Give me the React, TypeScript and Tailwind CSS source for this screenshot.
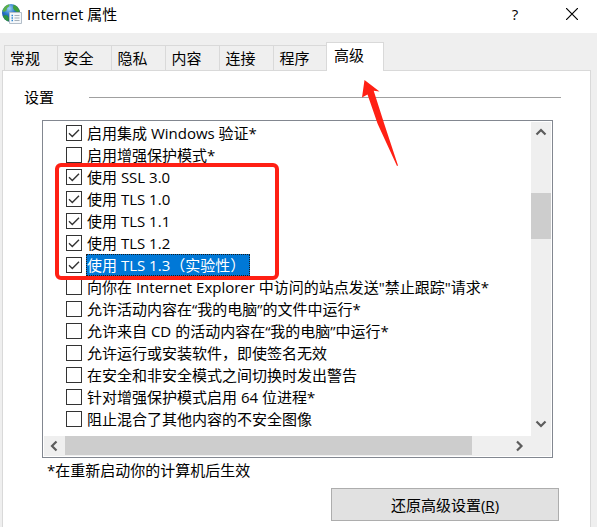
import { useState } from "react";

interface Option {
  id: string;
  label: string;
  checked: boolean;
}

const TABS = ["常规", "安全", "隐私", "内容", "连接", "程序", "高级"];

const OPTIONS: Option[] = [
  { id: "verify", label: "启用集成 Windows 验证*", checked: true },
  { id: "protect", label: "启用增强保护模式*", checked: false },
  { id: "ssl30", label: "使用 SSL 3.0", checked: true },
  { id: "tls10", label: "使用 TLS 1.0", checked: true },
  { id: "tls11", label: "使用 TLS 1.1", checked: true },
  { id: "tls12", label: "使用 TLS 1.2", checked: true },
  { id: "tls13", label: "使用 TLS 1.3（实验性）", checked: true },
  { id: "dnt", label: "向你在 Internet Explorer 中访问的站点发送\"禁止跟踪\"请求*", checked: false },
  { id: "files", label: "允许活动内容在“我的电脑”的文件中运行*", checked: false },
  { id: "cd", label: "允许来自 CD 的活动内容在“我的电脑”中运行*", checked: false },
  { id: "unsigned", label: "允许运行或安装软件，即使签名无效", checked: false },
  { id: "warn", label: "在安全和非安全模式之间切换时发出警告", checked: false },
  { id: "x64", label: "针对增强保护模式启用 64 位进程*", checked: false },
  { id: "mixed", label: "阻止混合了其他内容的不安全图像", checked: false },
];

const CHEVRONS = {
  up: "M1.5 8.5 6 4l4.5 4.5",
  down: "M1.5 3.5 6 8l4.5-4.5",
  left: "M7.5 1.5 3 6l4.5 4.5",
  right: "M4 1.5 8.5 6 4 10.5",
};

function Chevron({ direction }: { direction: keyof typeof CHEVRONS }) {
  return (
    <svg className="size-3" viewBox="0 0 12 12" fill="none" stroke="#5c5c5c" strokeWidth={2.2}>
      <path d={CHEVRONS[direction]} />
    </svg>
  );
}

function InternetIcon() {
  return (
    <svg className="size-5" viewBox="0 0 20 20" aria-hidden="true">
      <defs>
        <radialGradient id="globe" cx="0.4" cy="0.25" r="0.75">
          <stop offset="0" stopColor="#9fd3f5" />
          <stop offset="0.45" stopColor="#2b78c8" />
          <stop offset="1" stopColor="#0f3384" />
        </radialGradient>
      </defs>
      <circle cx="9" cy="9" r="9" fill="url(#globe)" />
      <path d="M1.5 4.5C2.8 2 5.2.6 7.500.2L7 2.500 5 4 4.500 6.500 2 8 .5 7z" fill="#5cb046" />
      <path d="M11.500.8c3.500 1 5.800 3.700 6.300 7L15 8l-2.500-1.500-1.500-2.500z" fill="#3f9e3a" />
      <path d="M2.500 11l3 .5L7 14l-.5 3.500C4 16.800 2 15 1 12.500z" fill="#2f9440" />
      <path d="M7.500 8.500h12v11h-12z" fill="#f4f7fa" stroke="#b3bec9" />
      <path d="M9.500 11.500h1.500M9.500 14h1.500M9.500 16.500h1.500" stroke="#2f86d2" strokeWidth="1.300" />
      <path d="M12.500 11.500h5M12.500 14h5M12.500 16.500h5" stroke="#a5afb9" />
    </svg>
  );
}

function OptionRow({
  option,
  selected,
  onToggle,
}: {
  option: Option;
  selected: boolean;
  onToggle: () => void;
}) {
  return (
    <li className="flex h-[22px] items-center gap-1">
      <span className="grid size-4 shrink-0">
        <input
          id={option.id}
          type="checkbox"
          checked={option.checked}
          onChange={onToggle}
          className="col-start-1 row-start-1 size-4 appearance-none border border-[#333333] bg-white"
        />
        {option.checked && (
          <svg
            className="pointer-events-none col-start-1 row-start-1 size-4"
            viewBox="0 0 16 16"
            fill="none"
            stroke="#333333"
            strokeWidth={1.4}
          >
            <path d="M3 8.300 6.300 11.500 13 4.700" />
          </svg>
        )}
      </span>
      <label
        htmlFor={option.id}
        className={
          selected
            ? "border border-dotted border-[#1a1a1a] bg-[#0078d7] pr-1 leading-5 whitespace-nowrap text-white"
            : "border border-transparent leading-5 whitespace-nowrap"
        }
      >
        {option.label}
      </label>
    </li>
  );
}

export default function App() {
  const [options, setOptions] = useState(OPTIONS);
  const [activeTab, setActiveTab] = useState("高级");
  const [selectedId, setSelectedId] = useState("tls13");

  const toggle = (id: string) => {
    setSelectedId(id);
    setOptions(options.map((o) => (o.id === id ? { ...o, checked: !o.checked } : o)));
  };

  return (
    <div className="relative flex min-h-screen flex-col bg-[#efefef] font-['Open_Sans','Noto_Sans_CJK_SC',sans-serif] text-[15px] text-black">
      <header className="flex h-[33px] items-start justify-between bg-white pt-1 pr-[15px] pl-0.5">
        <div className="flex items-start gap-[5px]">
          <InternetIcon />
          <h1 className="leading-5">Internet 属性</h1>
        </div>
        <div className="flex items-center gap-[39px]">
          <button type="button" aria-label="帮助" className="w-4 leading-5">
            ?
          </button>
          <button type="button" aria-label="关闭" className="grid size-5 place-items-center">
            <svg className="size-3" viewBox="0 0 12 12" stroke="black" strokeWidth={1.2}>
              <path d="M0 0 12 12M12 0 0 12" />
            </svg>
          </button>
        </div>
      </header>

      <nav role="tablist" className="relative z-10 flex items-end pt-[9px] pl-1">
        {TABS.map((tab) => (
          <button
            key={tab}
            type="button"
            role="tab"
            aria-selected={tab === activeTab}
            onClick={() => setActiveTab(tab)}
            className={
              tab === activeTab
                ? "-mb-px -ml-px h-[29px] w-[58px] border border-b-0 border-[#d9d9d9] bg-white pr-3 pb-1 leading-5"
                : "h-[25px] w-[54px] border-t border-l border-[#d9d9d9] pr-3 leading-5 first:w-[53px]"
            }
          >
            {tab}
          </button>
        ))}
      </nav>

      <main className="mr-1.5 ml-0.5 flex grow flex-col border border-b-0 border-[#d9d9d9] bg-white pr-[29px] pl-[21px]">
        <div className="flex items-center gap-[35px] pt-4">
          <h2 className="leading-5">设置</h2>
          <div className="h-px grow bg-[#a0a0a0]" />
        </div>

        <section className="mt-[13px] mr-2 ml-[18px] flex flex-col border border-[#828790] p-px">
          <div className="flex">
            <div className="relative min-w-0 grow pb-1.5 pl-[22px]">
              <ul>
                {options.map((option) => (
                  <OptionRow
                    key={option.id}
                    option={option}
                    selected={option.id === selectedId}
                    onToggle={() => toggle(option.id)}
                  />
                ))}
              </ul>
              {/* Highlight around the SSL / TLS versions */}
              <div className="pointer-events-none absolute top-[41px] left-[11px] h-[117px] w-[224px] rounded-md border-4 border-[#ff2014]" />
            </div>
            <div className="flex w-5 flex-col items-center bg-[#efefef]">
              <button type="button" aria-label="向上滚动" className="grid h-5 w-5 place-items-center">
                <Chevron direction="up" />
              </button>
              <div className="mt-[51px] h-[46px] w-5 bg-[#cdcdcd]" />
              <button type="button" aria-label="向下滚动" className="mt-auto mb-0.5 grid h-5 w-5 place-items-center">
                <Chevron direction="down" />
              </button>
            </div>
          </div>
          <div className="flex h-5 bg-[#efefef] pr-5">
            <button type="button" aria-label="向左滚动" className="grid w-[21px] place-items-center">
              <Chevron direction="left" />
            </button>
            <div className="flex grow">
              <div className="h-[19px] w-[92%] bg-[#cdcdcd]" />
            </div>
            <button type="button" aria-label="向右滚动" className="grid w-6 place-items-center">
              <Chevron direction="right" />
            </button>
          </div>
        </section>

        <p className="mt-0.5 ml-[23px] leading-5">*在重新启动你的计算机后生效</p>
        <button
          type="button"
          className="mt-2 mr-0.5 mb-1.5 h-[33px] w-[228px] self-end border border-[#adadad] bg-[#e1e1e1] leading-5"
        >
          还原高级设置(<u>R</u>)
        </button>
      </main>

      {/* Arrow pointing at the active tab */}
      <svg
        className="pointer-events-none absolute top-20 left-[362px] z-20 h-[87px] w-[37px]"
        viewBox="0 0 37 87"
        fill="#ff2014"
      >
        <path d="M2.500 0 17.500 11.500 11.700 10.800 22.300 44 36 85.500 35 86 15.700 44 5.500 14.500 0 17.500z" />
      </svg>
    </div>
  );
}
